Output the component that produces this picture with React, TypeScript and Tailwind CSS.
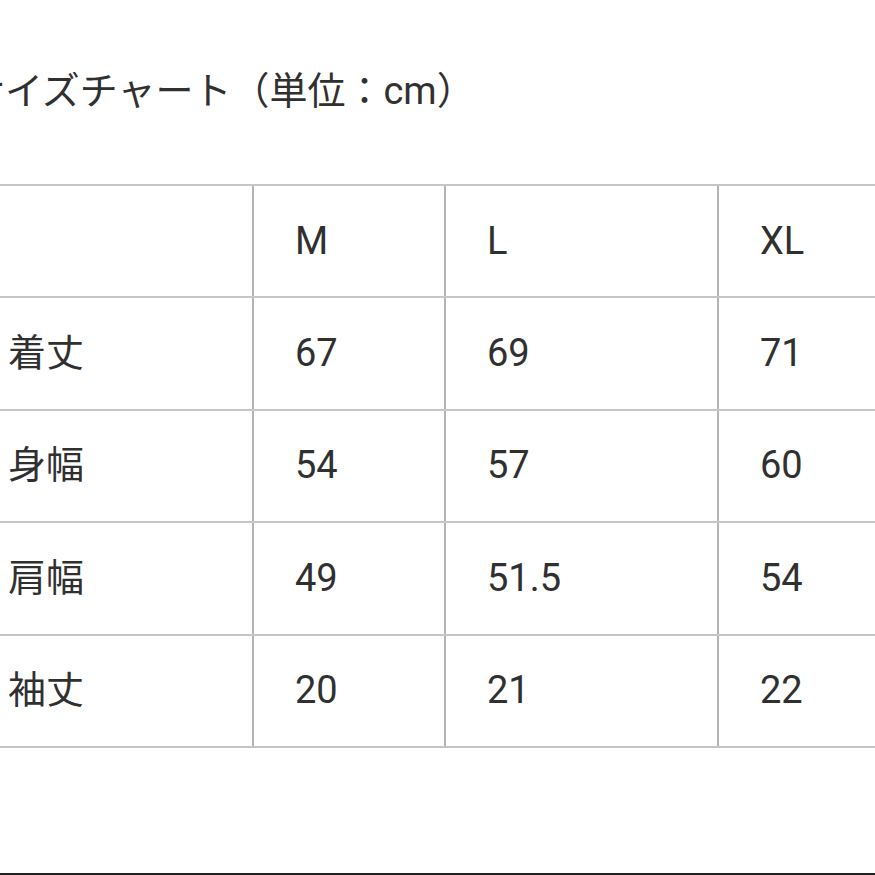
import React from "react";

const rows: [string, string, string, string][] = [
  ["", "M", "L", "XL"],
  ["着丈", "67", "69", "71"],
  ["身幅", "54", "57", "60"],
  ["肩幅", "49", "51.5", "54"],
  ["袖丈", "20", "21", "22"],
];

const widths = ["w-[287px]", "w-[192px]", "w-[273px]", "w-[273px]"];

export default function App() {
  return (
    <div
      className="flex h-[875px] w-[875px] flex-col overflow-hidden bg-white text-[#303030]"
      style={{ fontFamily: "Roboto, 'Noto Sans CJK JP', sans-serif" }}
    >
      <div className="-ml-[33px] flex flex-col">
        <div className="pt-[67px] text-[38px] leading-[48px] whitespace-nowrap">
          サイズチャート（単位：cm）
        </div>
        <div className="mt-[69px] flex w-[1025px] flex-col border-t-2 border-[#c6c6c6]">
          {rows.map((r, i) => (
            <div key={i} className="flex h-[112.4px] border-b-2 border-[#c6c6c6]">
              {r.map((c, j) => (
                <div
                  key={j}
                  className={`${widths[j]} flex shrink-0 items-center pl-[41px] text-[38px] ${
                    j < 3 ? "border-r-2 border-[#b4b4b4]" : ""
                  }`}
                >
                  {c}
                </div>
              ))}
            </div>
          ))}
        </div>
      </div>
      <div className="mt-auto h-[2px] bg-[#222]" />
    </div>
  );
}
